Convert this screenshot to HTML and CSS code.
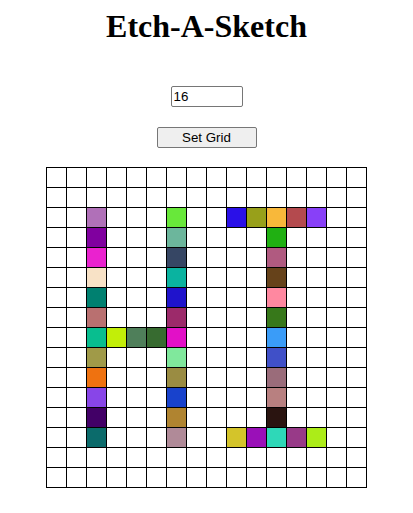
FILE: index.html
```html
<!DOCTYPE html>
<html lang="en">
<head>
<meta charset="utf-8">
<title>Etch-A-Sketch</title>
<link rel="stylesheet" href="styles.css">
</head>
<body>
<main class="app">
  <h1 class="title">Etch-A-Sketch</h1>
  <input class="size-input" type="text" value="16">
  <button class="set-btn" type="button">Set Grid</button>
  <div class="grid">
    <div class="cell"></div><div class="cell"></div><div class="cell"></div><div class="cell"></div><div class="cell"></div><div class="cell"></div><div class="cell"></div><div class="cell"></div><div class="cell"></div><div class="cell"></div><div class="cell"></div><div class="cell"></div><div class="cell"></div><div class="cell"></div><div class="cell"></div><div class="cell"></div>
    <div class="cell"></div><div class="cell"></div><div class="cell"></div><div class="cell"></div><div class="cell"></div><div class="cell"></div><div class="cell"></div><div class="cell"></div><div class="cell"></div><div class="cell"></div><div class="cell"></div><div class="cell"></div><div class="cell"></div><div class="cell"></div><div class="cell"></div><div class="cell"></div>
    <div class="cell"></div><div class="cell"></div><div class="cell" style="background:#b070b8"></div><div class="cell"></div><div class="cell"></div><div class="cell"></div><div class="cell" style="background:#68e83a"></div><div class="cell"></div><div class="cell"></div><div class="cell" style="background:#2a10e8"></div><div class="cell" style="background:#98a01a"></div><div class="cell" style="background:#f8b83a"></div><div class="cell" style="background:#b44a4e"></div><div class="cell" style="background:#8840f8"></div><div class="cell"></div><div class="cell"></div>
    <div class="cell"></div><div class="cell"></div><div class="cell" style="background:#80009f"></div><div class="cell"></div><div class="cell"></div><div class="cell"></div><div class="cell" style="background:#6cb69c"></div><div class="cell"></div><div class="cell"></div><div class="cell"></div><div class="cell"></div><div class="cell" style="background:#20b012"></div><div class="cell"></div><div class="cell"></div><div class="cell"></div><div class="cell"></div>
    <div class="cell"></div><div class="cell"></div><div class="cell" style="background:#ea22cf"></div><div class="cell"></div><div class="cell"></div><div class="cell"></div><div class="cell" style="background:#364664"></div><div class="cell"></div><div class="cell"></div><div class="cell"></div><div class="cell"></div><div class="cell" style="background:#b05a80"></div><div class="cell"></div><div class="cell"></div><div class="cell"></div><div class="cell"></div>
    <div class="cell"></div><div class="cell"></div><div class="cell" style="background:#f8e2c6"></div><div class="cell"></div><div class="cell"></div><div class="cell"></div><div class="cell" style="background:#0ab3a0"></div><div class="cell"></div><div class="cell"></div><div class="cell"></div><div class="cell"></div><div class="cell" style="background:#66421a"></div><div class="cell"></div><div class="cell"></div><div class="cell"></div><div class="cell"></div>
    <div class="cell"></div><div class="cell"></div><div class="cell" style="background:#008070"></div><div class="cell"></div><div class="cell"></div><div class="cell"></div><div class="cell" style="background:#1f13cc"></div><div class="cell"></div><div class="cell"></div><div class="cell"></div><div class="cell"></div><div class="cell" style="background:#ff88a0"></div><div class="cell"></div><div class="cell"></div><div class="cell"></div><div class="cell"></div>
    <div class="cell"></div><div class="cell"></div><div class="cell" style="background:#b97070"></div><div class="cell"></div><div class="cell"></div><div class="cell"></div><div class="cell" style="background:#9c2a6a"></div><div class="cell"></div><div class="cell"></div><div class="cell"></div><div class="cell"></div><div class="cell" style="background:#37781a"></div><div class="cell"></div><div class="cell"></div><div class="cell"></div><div class="cell"></div>
    <div class="cell"></div><div class="cell"></div><div class="cell" style="background:#08be8f"></div><div class="cell" style="background:#c2ee08"></div><div class="cell" style="background:#4f7f5a"></div><div class="cell" style="background:#376b30"></div><div class="cell" style="background:#e210c7"></div><div class="cell"></div><div class="cell"></div><div class="cell"></div><div class="cell"></div><div class="cell" style="background:#3a9cf8"></div><div class="cell"></div><div class="cell"></div><div class="cell"></div><div class="cell"></div>
    <div class="cell"></div><div class="cell"></div><div class="cell" style="background:#a09a48"></div><div class="cell"></div><div class="cell"></div><div class="cell"></div><div class="cell" style="background:#80e89c"></div><div class="cell"></div><div class="cell"></div><div class="cell"></div><div class="cell"></div><div class="cell" style="background:#4050c8"></div><div class="cell"></div><div class="cell"></div><div class="cell"></div><div class="cell"></div>
    <div class="cell"></div><div class="cell"></div><div class="cell" style="background:#ef7210"></div><div class="cell"></div><div class="cell"></div><div class="cell"></div><div class="cell" style="background:#9a8c42"></div><div class="cell"></div><div class="cell"></div><div class="cell"></div><div class="cell"></div><div class="cell" style="background:#9a6c7a"></div><div class="cell"></div><div class="cell"></div><div class="cell"></div><div class="cell"></div>
    <div class="cell"></div><div class="cell"></div><div class="cell" style="background:#8845e8"></div><div class="cell"></div><div class="cell"></div><div class="cell"></div><div class="cell" style="background:#1842cc"></div><div class="cell"></div><div class="cell"></div><div class="cell"></div><div class="cell"></div><div class="cell" style="background:#b88080"></div><div class="cell"></div><div class="cell"></div><div class="cell"></div><div class="cell"></div>
    <div class="cell"></div><div class="cell"></div><div class="cell" style="background:#420067"></div><div class="cell"></div><div class="cell"></div><div class="cell"></div><div class="cell" style="background:#b08430"></div><div class="cell"></div><div class="cell"></div><div class="cell"></div><div class="cell"></div><div class="cell" style="background:#2a1410"></div><div class="cell"></div><div class="cell"></div><div class="cell"></div><div class="cell"></div>
    <div class="cell"></div><div class="cell"></div><div class="cell" style="background:#0b6b6b"></div><div class="cell"></div><div class="cell"></div><div class="cell"></div><div class="cell" style="background:#b08a98"></div><div class="cell"></div><div class="cell"></div><div class="cell" style="background:#d4c42a"></div><div class="cell" style="background:#9a10b8"></div><div class="cell" style="background:#2ed8b8"></div><div class="cell" style="background:#983a88"></div><div class="cell" style="background:#acec18"></div><div class="cell"></div><div class="cell"></div>
    <div class="cell"></div><div class="cell"></div><div class="cell"></div><div class="cell"></div><div class="cell"></div><div class="cell"></div><div class="cell"></div><div class="cell"></div><div class="cell"></div><div class="cell"></div><div class="cell"></div><div class="cell"></div><div class="cell"></div><div class="cell"></div><div class="cell"></div><div class="cell"></div>
    <div class="cell"></div><div class="cell"></div><div class="cell"></div><div class="cell"></div><div class="cell"></div><div class="cell"></div><div class="cell"></div><div class="cell"></div><div class="cell"></div><div class="cell"></div><div class="cell"></div><div class="cell"></div><div class="cell"></div><div class="cell"></div><div class="cell"></div><div class="cell"></div>
  </div>
</main>
</body>
</html>
```
FILE: styles.css
```css
html, body {
  margin: 0;
  padding: 0;
  background: #ffffff;
}

.app {
  display: flex;
  flex-direction: column;
  align-items: center;
  padding-top: 8px;
  font-family: "Liberation Serif", "Times New Roman", serif;
}

.title {
  margin: 0;
  font-size: 32px;
  line-height: 37px;
  font-weight: bold;
  color: #000;
}

.size-input {
  box-sizing: border-box;
  margin-top: 41px;
  width: 72px;
  height: 21px;
  padding: 1px 2px;
  border: 1px solid #767676;
  border-radius: 2px;
  font-family: "Liberation Sans", Arial, sans-serif;
  font-size: 13.333px;
  color: #000;
  background: #fff;
}

.set-btn {
  box-sizing: border-box;
  margin-top: 20px;
  width: 100px;
  height: 21px;
  padding: 1px 6px;
  border: 1px solid #767676;
  border-radius: 2px;
  background: #efefef;
  font-family: "Liberation Sans", Arial, sans-serif;
  font-size: 13.333px;
  color: #000;
}

.grid {
  margin-top: 19px;
  display: grid;
  grid-template-columns: repeat(16, 19px);
  grid-auto-rows: 19px;
  gap: 1px;
  border: 1px solid #000;
  background: #000;
}

.cell {
  background: #fff;
}
```
